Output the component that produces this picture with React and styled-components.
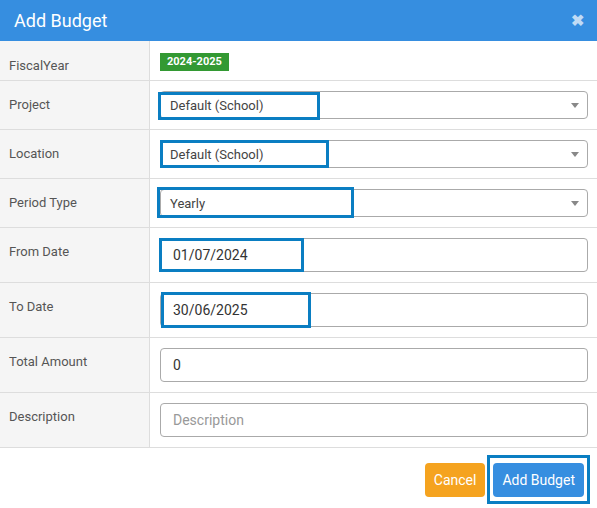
import React from 'react'
import styled, { createGlobalStyle } from 'styled-components'

const GlobalStyle = createGlobalStyle`
    html, body {
        margin: 0;
        padding: 0;
        background: #fff;
        font-family: Roboto, "Liberation Sans", Arial, sans-serif;
    }
    * { box-sizing: border-box; }
`

const Modal = styled.div`
    width: 597px;
    background: #fff;
`

const Header = styled.div`
    display: flex;
    align-items: center;
    justify-content: space-between;
    height: 41px;
    padding: 0 14px;
    background: #368ee0;
    color: #fff;
`

const Title = styled.h4`
    margin: 0;
    font-size: 18px;
    font-weight: 400;
    line-height: 41px;
`

const Close = styled.span`
    font-size: 16px;
    font-weight: 700;
    color: rgba(255, 255, 255, 0.7);
    margin-right: -1px;
`

const Table = styled.div`
    display: grid;
    grid-template-columns: 150px 1fr;
`

const Label = styled.div`
    background: #f5f5f5;
    border-right: 1px solid #ddd;
    border-bottom: 1px solid #ddd;
    padding: ${p => p.$top || 16}px 9px 0;
    font-size: 13px;
    line-height: 16px;
    color: #555;
    height: ${p => p.$h}px;
`

const Cell = styled.div`
    border-bottom: 1px solid #ddd;
    padding: ${p => p.$top || 10}px 9px 0 10px;
    height: ${p => p.$h}px;
`

const Field = styled.div`
    position: relative;
`

const Badge = styled.div`
    width: fit-content;
    background: #339933;
    color: #fff;
    font-size: 11px;
    font-weight: 700;
    line-height: 18px;
    padding: 0 7px;
`

const Select = styled.div`
    display: flex;
    align-items: center;
    justify-content: space-between;
    height: 28px;
    padding: 0 9px;
    border: 1px solid #aaa;
    border-radius: 4px;
    font-size: 13px;
    color: #444;
`

const Caret = styled.span`
    width: 0;
    height: 0;
    border-left: 4px solid transparent;
    border-right: 4px solid transparent;
    border-top: 5px solid #888;
    margin-right: -1px;
`

const Input = styled.div`
    display: flex;
    align-items: center;
    height: 34px;
    padding: 0 12px;
    border: 1px solid #aaa;
    border-radius: 4px;
    font-size: 14px;
    color: ${p => (p.$placeholder ? '#999' : '#333')};
`

const Highlight = styled.div`
    position: absolute;
    border: 3px solid #0a7ec2;
    pointer-events: none;
`

const Footer = styled.div`
    position: relative;
    display: flex;
    justify-content: flex-end;
    gap: 8px;
    padding: 15px 13px 15px;
`

const Button = styled.button`
    height: 34px;
    padding: 0 ${p => p.$pad}px;
    border: none;
    border-radius: 4px;
    background: ${p => p.$bg};
    color: #fff;
    font-family: inherit;
    font-size: 14px;
`

const SelectRow = ({ label, value, box }) => (
    <>
        <Label $h={49}>{label}</Label>
        <Cell $h={49}>
            <Field>
                <Select>{value}<Caret /></Select>
                <Highlight style={box} />
            </Field>
        </Cell>
    </>
)

const InputRow = ({ label, value, placeholder, box }) => (
    <>
        <Label $h={55}>{label}</Label>
        <Cell $h={55}>
            <Field>
                <Input $placeholder={placeholder}>{value || placeholder}</Input>
                {box && <Highlight style={box} />}
            </Field>
        </Cell>
    </>
)

export default function App() {
    return (
        <>
            <GlobalStyle />
            <Modal>
                <Header>
                    <Title>Add Budget</Title>
                    <Close>✖</Close>
                </Header>
                <Table>
                    <Label $h={40} $top={17}>FiscalYear</Label>
                    <Cell $h={40} $top={12}><Badge>2024-2025</Badge></Cell>
                    <SelectRow label="Project" value="Default (School)" box={{ left: -2, top: 1, width: 162, height: 28 }} />
                    <SelectRow label="Location" value="Default (School)" box={{ left: 0, top: 0, width: 169, height: 28 }} />
                    <SelectRow label="Period Type" value="Yearly" box={{ left: -3, top: -2, width: 197, height: 31 }} />
                    <InputRow label="From Date" value="01/07/2024" box={{ left: -1, top: 0, width: 145, height: 34 }} />
                    <InputRow label="To Date" value="30/06/2025" box={{ left: 1, top: -1, width: 150, height: 36 }} />
                    <InputRow label="Total Amount" value="0" />
                    <InputRow label="Description" placeholder="Description" />
                </Table>
                <Footer>
                    <Button $bg="#f5a31f" $pad={9}>Cancel</Button>
                    <Button $bg="#368ee0" $pad={9}>Add Budget</Button>
                    <Highlight style={{ right: 7, top: 7, width: 103, height: 49 }} />
                </Footer>
            </Modal>
        </>
    )
}
